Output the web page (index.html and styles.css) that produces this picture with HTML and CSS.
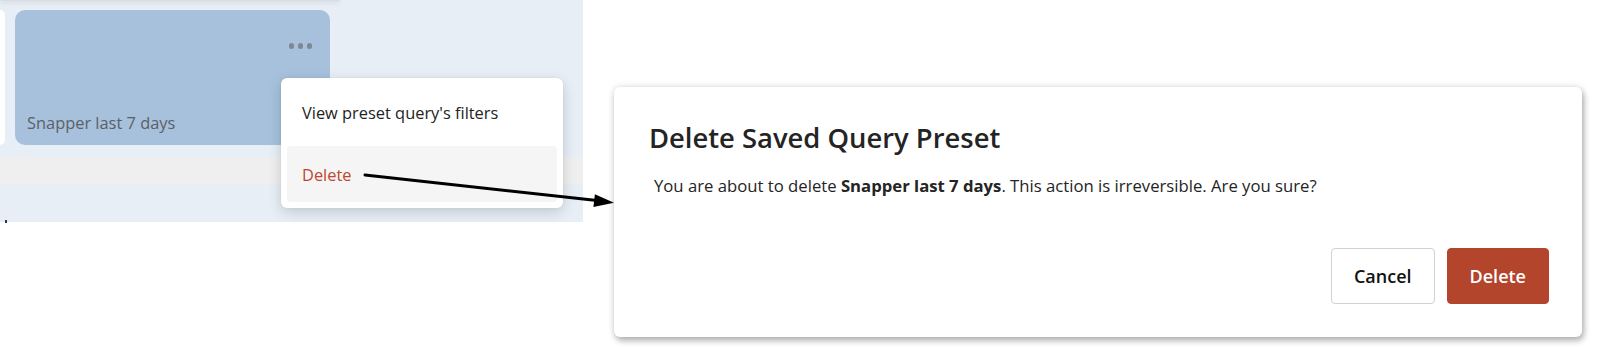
FILE: index.html
```html
<!DOCTYPE html>
<html lang="en">
<head>
<meta charset="utf-8">
<title>Delete Saved Query Preset</title>
<link rel="stylesheet" href="styles.css">
</head>
<body>
<div class="page">
  <section class="board">
    <div class="prev-card"></div>
    <div class="cards">
      <div class="stub-card"></div>
      <div class="preset-card">
        <div class="card-top">
          <span class="more" aria-label="More options"><i></i><i></i><i></i></span>
        </div>
        <div class="card-name">Snapper last 7 days</div>
      </div>
    </div>
    <div class="band"></div>
    <div class="cut-mark"></div>
    <ul class="menu">
      <li class="menu-item">View preset query's filters</li>
      <li class="menu-item menu-item--danger">Delete</li>
    </ul>
  </section>

  <div class="dialog" role="dialog">
    <h2 class="dialog-title">Delete Saved Query Preset</h2>
    <p class="dialog-body">You are about to delete <strong>Snapper last 7 days</strong>. This action is irreversible. Are you sure?</p>
    <div class="dialog-actions">
      <button class="btn btn--secondary">Cancel</button>
      <button class="btn btn--danger">Delete</button>
    </div>
  </div>

  <svg class="arrow" width="1600" height="347" viewBox="0 0 1600 347" aria-hidden="true">
    <line x1="365" y1="175" x2="597" y2="200.6" stroke="#000" stroke-width="3" stroke-linecap="round"/>
    <polygon points="614,202.7 593.4,207 594.9,194.3" fill="#000"/>
  </svg>
</div>
</body>
</html>
```

FILE: styles.css
```css
* { box-sizing: border-box; }

html, body {
  margin: 0;
  padding: 0;
  background: #ffffff;
}

body {
  width: 1600px;
  height: 347px;
  overflow: hidden;
  font-family: "Open Sans", "Noto Sans", Arial, sans-serif;
  color: #242424;
}

.page {
  position: relative;
  display: flex;
  align-items: flex-start;
  width: 1600px;
  height: 347px;
}

/* ---------- left board ---------- */
.board {
  position: relative;
  width: 583px;
  height: 222px;
  background: #e7eef6;
  flex: none;
}

.prev-card {
  width: 340px;
  height: 1px;
  background: #d9dde3;
  box-shadow: 0 1px 5px rgba(0, 0, 0, 0.28);
  border-radius: 0 0 6px 6px;
}

.cards {
  display: flex;
  gap: 10px;
  margin-top: 9px;
}

.stub-card {
  width: 5px;
  height: 135px;
  background: #ffffff;
  border-radius: 0 5px 5px 0;
}

.preset-card {
  width: 315px;
  height: 135px;
  background: #a7c1dc;
  border-radius: 10px;
  display: flex;
  flex-direction: column;
  justify-content: space-between;
  padding: 33px 18px 11px 12px;
}

.card-top {
  display: flex;
  justify-content: flex-end;
}

.more {
  display: flex;
  gap: 3.5px;
}

.more i {
  display: block;
  width: 5.5px;
  height: 5.5px;
  border-radius: 50%;
  background: #7d8893;
}

.card-name {
  font-size: 16.4px;
  line-height: 22px;
  color: #5b6066;
}

.band {
  margin-top: 12px;
  height: 27px;
  background: #efefef;
}

.cut-mark {
  width: 2px;
  height: 3px;
  margin: 36px 0 0 5px;
  background: #1e3a5f;
}

.menu {
  position: absolute;
  left: 281px;
  top: 78px;
  width: 282px;
  margin: 0;
  padding: 6px;
  list-style: none;
  background: #ffffff;
  border-radius: 6px;
  box-shadow: 0 4px 14px rgba(0, 0, 0, 0.16), 0 0 2px rgba(0, 0, 0, 0.08);
  display: flex;
  flex-direction: column;
  gap: 6px;
}

.menu-item {
  height: 56px;
  display: flex;
  align-items: center;
  padding-left: 15px;
  font-size: 16.4px;
  color: #242424;
  border-radius: 4px;
}

.menu-item--danger {
  background: #f5f5f5;
  color: #c0472d;
}

/* ---------- dialog ---------- */
.dialog {
  flex: none;
  margin: 87px 0 0 31px;
  width: 968px;
  height: 250px;
  background: #ffffff;
  border-radius: 6px;
  box-shadow: 2px 4px 6px rgba(0, 0, 0, 0.26), 0 0 7px rgba(0, 0, 0, 0.14);
  display: flex;
  flex-direction: column;
  padding: 34px 33px 33px 35px;
}

.dialog-title {
  margin: 0;
  font-size: 27.4px;
  line-height: 34px;
  font-weight: 600;
  color: #242424;
}

.dialog-body {
  margin: 19px 0 0 5px;
  font-size: 16.7px;
  line-height: 24px;
  color: #242424;
}

.dialog-body strong {
  font-weight: 700;
}

.dialog-actions {
  margin-top: auto;
  display: flex;
  justify-content: flex-end;
  gap: 12px;
}

.btn {
  height: 56px;
  padding: 0 22px;
  border-radius: 4px;
  font-family: inherit;
  font-size: 18px;
  font-weight: 600;
  cursor: pointer;
}

.btn--secondary {
  background: #ffffff;
  border: 1px solid #d1d1d1;
  color: #111111;
}

.btn--danger {
  background: #b3452c;
  border: 1px solid #b3452c;
  color: #ffffff;
}

/* ---------- annotation arrow ---------- */
.arrow {
  position: absolute;
  left: 0;
  top: 0;
  pointer-events: none;
}
```
